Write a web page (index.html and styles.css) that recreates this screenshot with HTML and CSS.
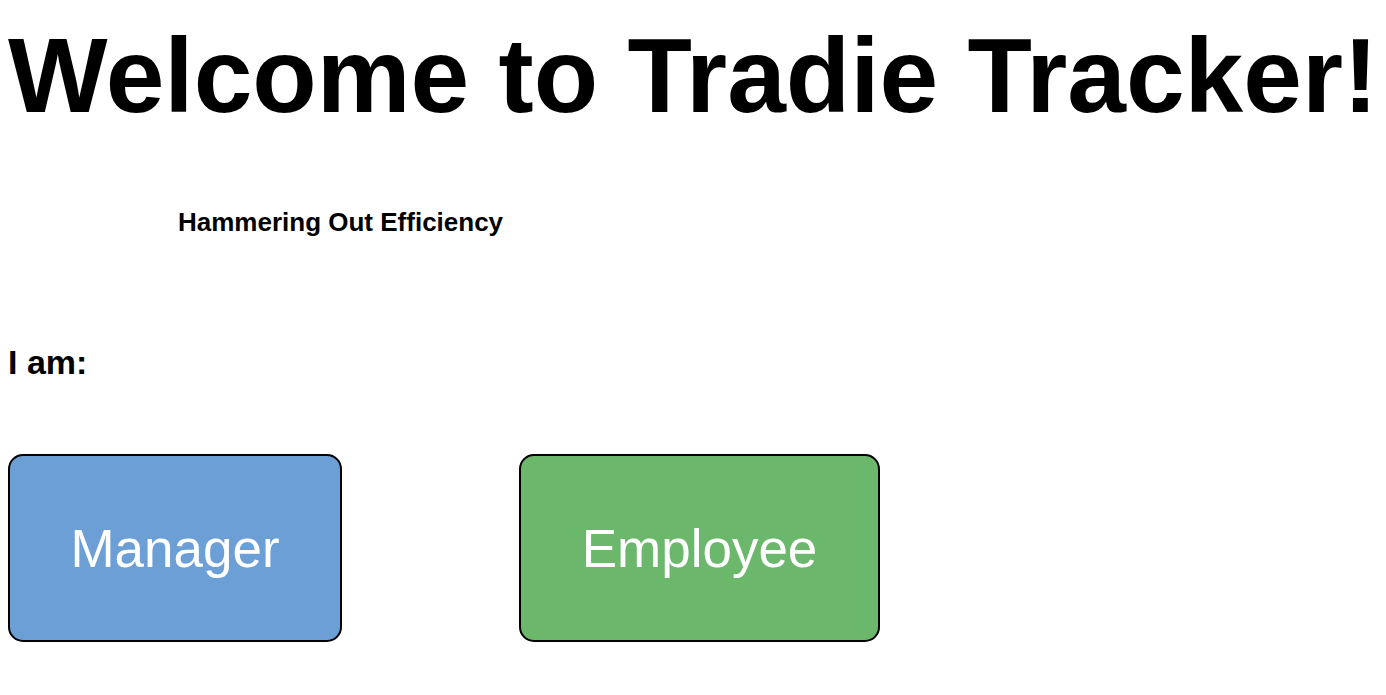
FILE: index.html
```html
<!DOCTYPE html>
<html lang="en">
<head>
<meta charset="utf-8">
<title>Tradie Tracker</title>
<link rel="stylesheet" href="styles.css">
</head>
<body>
  <h1 class="title">Welcome to Tradie Tracker!</h1>
  <p class="tagline">Hammering Out Efficiency</p>
  <h2 class="prompt">I am:</h2>
  <div class="roles">
    <button class="role role-manager">Manager</button>
    <button class="role role-employee">Employee</button>
  </div>
</body>
</html>
```
FILE: styles.css
```css
body {
  margin: 8px;
  font-family: "Liberation Sans", Arial, sans-serif;
  color: #000;
  background: #fff;
}
.title {
  margin: 7px 0 0;
  font-size: 105.5px;
  font-weight: bold;
  line-height: 1.15;
  white-space: nowrap;
}
.tagline {
  margin: 71px 0 0 170px;
  font-size: 26px;
  font-weight: bold;
}
.prompt {
  margin: 105px 0 0;
  font-size: 34px;
  font-weight: bold;
}
.roles {
  display: flex;
  gap: 177px;
  margin-top: 72px;
}
.role {
  height: 188px;
  border: 2px solid #000;
  border-radius: 15px;
  color: #fff;
  font-family: "Liberation Sans", Arial, sans-serif;
  font-size: 53px;
  padding: 0;
}
.role-manager {
  width: 334px;
  background: #6b9fd6;
}
.role-employee {
  width: 361px;
  background: #6bb76b;
}
```
